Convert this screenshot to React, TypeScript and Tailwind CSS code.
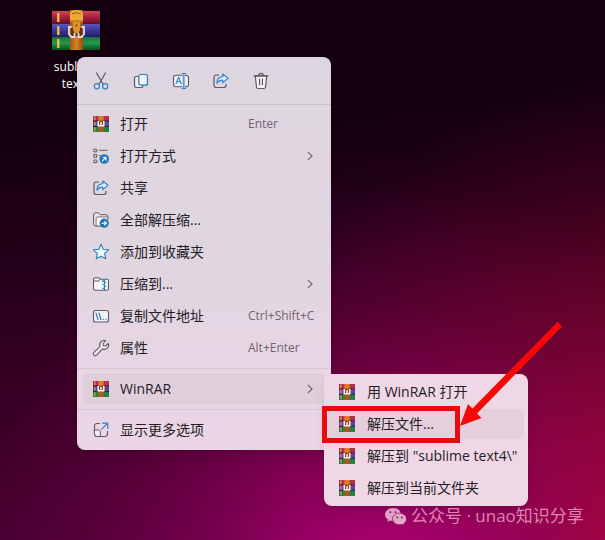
import type { ReactNode } from "react";

type IconProps = { children: ReactNode };

function Icon({ children }: IconProps) {
  return (
    <svg
      viewBox="0 0 16 16"
      className="size-4 shrink-0 overflow-visible"
      fill="none"
      stroke="#5d5963"
      strokeLinecap="round"
      strokeLinejoin="round"
      aria-hidden="true"
    >
      {children}
    </svg>
  );
}

function CutIcon() {
  return (
    <Icon>
      <path d="M3.6 0 10 11.2M12.4 0 6 11.2" strokeWidth="1.2" />
      <circle cx="3.8" cy="13.2" r="2.6" stroke="#2f86c8" strokeWidth="1.2" />
      <circle cx="12.2" cy="13.2" r="2.6" stroke="#2f86c8" strokeWidth="1.2" />
    </Icon>
  );
}

function CopyIcon() {
  return (
    <Icon>
      <path
        d="M5.5 3.5H3.2A1.7 1.7 0 0 0 1.5 5.2v7.6a1.7 1.7 0 0 0 1.7 1.7h5.1a1.7 1.7 0 0 0 1.7-1.7v-.6"
        fill="#eeedf4"
        strokeWidth="1.2"
      />
      <rect x="5.8" y="1.5" width="8.7" height="10.7" rx="2" fill="#edf6fd" stroke="#2879ae" strokeWidth="1.2" />
    </Icon>
  );
}

function RenameIcon() {
  return (
    <Icon>
      <path
        d="M9 2.2H3a2.5 2.5 0 0 0-2.5 2.5v6.6A2.5 2.5 0 0 0 3 13.8h6M12.4 2.2h.6a2.5 2.5 0 0 1 2.5 2.5v6.6a2.5 2.5 0 0 1-2.5 2.5h-.6"
        fill="#eeedf4"
        strokeWidth="1.1"
      />
      <path d="m3 10.8 2.6-6.6 2.6 6.6M3.9 8.7h3.4" stroke="#2f86c8" strokeWidth="1.1" />
      <path d="M9 .5h3.6M9 15.5h3.6M10.8.5v15" stroke="#2f86c8" strokeWidth="1.1" />
    </Icon>
  );
}

function ShareIcon() {
  return (
    <Icon>
      <path
        d="M5.5 2H3.2A2.2 2.2 0 0 0 1 4.2v8.1a2.2 2.2 0 0 0 2.2 2.2h7.6a2.2 2.2 0 0 0 2.2-2.2v-1"
        strokeWidth="1.2"
      />
      <path
        d="M9.8 1 15 5.3 9.8 9.6V7.2C7.2 7.1 5.4 8 4 10.3 4 6.6 6 3.9 9.8 3.6Z"
        fill="#e3f3fd"
        stroke="#2f86c8"
        strokeWidth="1.2"
      />
    </Icon>
  );
}

function TrashIcon() {
  return (
    <Icon>
      <path d="M2.2 2.8h11.6l-1.3 11.2a1.7 1.7 0 0 1-1.7 1.5H5.2A1.7 1.7 0 0 1 3.5 14Z" fill="#f5f1f5" strokeWidth="1.2" />
      <path d="M1 2.8h14M5.8 2.6a2.2 2.2 0 0 1 4.4 0M6.6 6.3v5.4M9.4 6.3v5.4" strokeWidth="1.2" />
    </Icon>
  );
}

function OpenWithIcon() {
  return (
    <Icon>
      <path d="M1.2 1.2h2.6v2.6H1.2ZM1.2 6.6h2.6v2.6H1.2ZM1.2 12h2.6v2.6H1.2ZM6.5 2.3H14M6.5 7.5h.5" />
      <circle cx="11.2" cy="11" r="4.8" fill="#2078b8" stroke="none" />
      <path d="m9.4 12.8 3.5-3.5M10.2 9.2H13V12" stroke="#fff" strokeWidth="1.1" />
    </Icon>
  );
}

function ExtractIcon() {
  return (
    <Icon>
      <path
        d="M7 14H2.8A2.2 2.2 0 0 1 .6 11.8V3A2.2 2.2 0 0 1 2.8.8h2.5l1.9 1.9h5.6a2 2 0 0 1 2 2v2"
        fill="#e9e3ea"
      />
      <path d="M7 14H4.6a1.5 1.5 0 0 1-1.5-1.5V6.4a1.5 1.5 0 0 1 1.5-1.5h10.2v3" fill="#f7f4f9" strokeWidth=".8" />
      <circle cx="11.2" cy="11.2" r="4.6" fill="#2078b8" stroke="none" />
      <path d="M9 11.2h4.3m-1.7-1.8 1.8 1.8-1.8 1.8" stroke="#fff" strokeWidth="1.1" />
    </Icon>
  );
}

function StarIcon() {
  return (
    <Icon>
      <path
        d="m8 .2 2.3 5 5.4.6-4 3.6 1.1 5.4L8 12.2l-4.8 2.6 1.1-5.4-4-3.6 5.4-.6Z"
        fill="#edf5fb"
        stroke="#2e7fb8"
        strokeWidth="1.1"
      />
    </Icon>
  );
}

function CompressIcon() {
  return (
    <Icon>
      <path
        d="M.5 3.5A1.8 1.8 0 0 1 2.3 1.7h3.2l1.8 1.6h6.4a1.8 1.8 0 0 1 1.8 1.8v7.4a1.8 1.8 0 0 1-1.8 1.8H2.3a1.8 1.8 0 0 1-1.8-1.8Z"
        fill="#f7f5fa"
        strokeWidth="1.1"
      />
      <path d="M.8 5h4.6l1.9-1.5" />
      <path
        d="M9.8 3.5v2h1.7M11.5 3.5v10.5M11.5 6.5h1.3M9.8 8.5h1.7M11.5 10.5h1.3M9.8 12.3h1.7"
        stroke="#2987b8"
        strokeWidth="1.2"
      />
    </Icon>
  );
}

function PathIcon() {
  return (
    <Icon>
      <rect x=".5" y="2.5" width="15" height="11.5" rx="2" fill="#f3f2f8" strokeWidth="1.1" />
      <path d="m3 5 1.9 6.5M6 5l1.9 6.5M10 11.4h.2M12.7 11.4h.2" stroke="#2a7baa" strokeWidth="1.1" />
    </Icon>
  );
}

function WrenchIcon() {
  return (
    <Icon>
      <path
        d="M12.6.7a4.4 4.4 0 0 0-5.5 6L.9 12.4a1.9 1.9 0 0 0 2.7 2.7l5.7-6.2a4.4 4.4 0 0 0 6-5.5L12.5 6l-2.2-.3-.3-2.2Z"
        fill="#f7f2f6"
        strokeWidth="1.1"
      />
    </Icon>
  );
}

function MoreIcon() {
  return (
    <Icon>
      <path
        d="M6.5 1.5H4A2.5 2.5 0 0 0 1.5 4v8A2.5 2.5 0 0 0 4 14.5h8a2.5 2.5 0 0 0 2.5-2.5v-2.5"
        strokeWidth="1.1"
      />
      <path d="M1.5 8h4A1.8 1.8 0 0 1 7.3 9.8v4.7H4A2.5 2.5 0 0 1 1.5 12Z" fill="#f5eff5" />
      <path d="M8.7 7.1 14.5 1.3M9.5 1.2h5.2v5.2" stroke="#2f86c8" strokeWidth="1.2" />
    </Icon>
  );
}

function WinrarIcon() {
  return (
    <svg viewBox="0 0 16 16" className="size-4 shrink-0" aria-hidden="true">
      <path d="M0 0h16v5H0z" fill="#b52f4b" />
      <path d="M0 5h16v5.5H0z" fill="#5a469c" />
      <path d="M0 10.5h16V16H0z" fill="#1d8540" />
      <path d="M0 4.500h16v.9H0zM0 10h16v.9H0z" fill="#382239" />
      <path d="M1.3.6h1.2v3.6H1.3zM1.3 5.9h1.2v3.5H1.3zM1.3 11.2h1.2v4H1.3z" fill="#d9a05b" />
      <path d="M5.5 0h5v16h-5z" fill="#b3561f" />
      <path d="M5.5 0h5v4.5h-5z" fill="#df7e2b" />
      <path d="M4.5 5h7v5.5h-7z" fill="#8a4527" />
      <path d="M5.2 5v4.800h5.600V5M8 6v3.500" fill="none" stroke="#fff" strokeWidth="1.400" />
    </svg>
  );
}

function ArchiveIcon() {
  return (
    <svg viewBox="0 0 48 40" className="h-10 w-12" aria-hidden="true">
      <defs>
        <linearGradient id="red" x2="0" y2="1">
          <stop stopColor="#d0495d" />
          <stop offset=".35" stopColor="#b62645" />
          <stop offset="1" stopColor="#600d27" />
        </linearGradient>
        <linearGradient id="blue" x2="0" y2="1">
          <stop stopColor="#5758bd" />
          <stop offset=".5" stopColor="#3d359a" />
          <stop offset="1" stopColor="#211b65" />
        </linearGradient>
        <linearGradient id="green" x2="0" y2="1">
          <stop stopColor="#167039" />
          <stop offset=".45" stopColor="#269b4c" />
          <stop offset="1" stopColor="#07501e" />
        </linearGradient>
        <linearGradient id="strap">
          <stop stopColor="#a45416" />
          <stop offset=".5" stopColor="#d98426" />
          <stop offset="1" stopColor="#9a4912" />
        </linearGradient>
      </defs>
      <rect y="1" width="48" height="13" rx="1" fill="url(#red)" />
      <rect y="14" width="48" height="13" rx="1" fill="url(#blue)" />
      <rect y="27" width="48" height="13" rx="1" fill="url(#green)" />
      <path d="M5 3h2.500v9H5zM5 16h2.500v9H5zM5 29h2.500v9H5z" fill="#e8b83f" />
      <path d="M18 0h13v40H18z" fill="url(#strap)" />
      <path d="M18 4q0-4 6.500-4T31 4v8H18z" fill="#edaa34" />
      <path d="M18 11h13M20 4q4.500-3 9 0" fill="none" stroke="#9c5a18" />
      <path d="M19 18h11v8H19z" fill="#5b3014" />
      <path d="M21 12h7v8l-1.500 3h-4L21 20z" fill="#df922c" />
      <circle cx="24.5" cy="15.5" r="1" fill="#753d16" />
      <path d="M19.500 17H17v7.500l2.500 2.500h3v-4M29.500 17H32v7.500l-2.500 2.500h-3v-4" fill="none" stroke="#e6dcd5" strokeWidth="1.800" />
    </svg>
  );
}

function Chevron() {
  return (
    <svg viewBox="0 0 8 12" className="ml-auto h-3 w-2 shrink-0" fill="none" stroke="#706870" strokeWidth="1.2" aria-hidden="true">
      <path d="M.8 1.8 5 6 .8 10.2" />
    </svg>
  );
}

type MenuEntry = {
  label: string;
  icon: ReactNode;
  shortcut?: string;
  submenu?: boolean;
};

const TOOLS = [
  { label: "剪切", icon: <CutIcon /> },
  { label: "复制", icon: <CopyIcon /> },
  { label: "重命名", icon: <RenameIcon /> },
  { label: "共享", icon: <ShareIcon /> },
  { label: "删除", icon: <TrashIcon /> },
];

const ENTRIES: MenuEntry[] = [
  { label: "打开", icon: <WinrarIcon />, shortcut: "Enter" },
  { label: "打开方式", icon: <OpenWithIcon />, submenu: true },
  { label: "共享", icon: <ShareIcon /> },
  { label: "全部解压缩...", icon: <ExtractIcon /> },
  { label: "添加到收藏夹", icon: <StarIcon /> },
  { label: "压缩到...", icon: <CompressIcon />, submenu: true },
  { label: "复制文件地址", icon: <PathIcon />, shortcut: "Ctrl+Shift+C" },
  { label: "属性", icon: <WrenchIcon />, shortcut: "Alt+Enter" },
];

const WINRAR_ENTRIES = ["用 WinRAR 打开", "解压文件...", '解压到 "sublime text4\\"', "解压到当前文件夹"];

function MenuRow({ label, icon, shortcut, submenu }: MenuEntry) {
  return (
    <button type="button" role="menuitem" className="flex h-8 w-full items-center px-4 text-left text-sm whitespace-nowrap">
      {icon}
      <span className="ml-[11px] w-32">{label}</span>
      {shortcut ? <span className="text-xs text-[#70656f]">{shortcut}</span> : null}
      {submenu ? <Chevron /> : null}
    </button>
  );
}

function ContextMenu() {
  return (
    <div
      role="menu"
      className="absolute top-[57px] left-[77px] w-[254px] rounded-lg bg-linear-to-b from-[#ddd5df] via-[#e0d6e0] to-[#ebd5e5] text-[#241d26] shadow-lg"
    >
      <div className="flex h-12 items-center gap-6 border-b border-[#cbc1cd] px-4">
        {TOOLS.map((tool) => (
          <button key={tool.label} type="button" aria-label={tool.label}>
            {tool.icon}
          </button>
        ))}
      </div>
      <div className="border-b border-[#d6c7d3] pt-[3px] pb-1">
        {ENTRIES.map((entry) => (
          <MenuRow key={entry.label} {...entry} />
        ))}
      </div>
      <div className="border-b border-[#d6c7d3] pt-1 pb-[5px]">
        <div className="mx-1.5 rounded bg-[#e0cfdb]">
          <button type="button" role="menuitem" className="flex h-[31px] w-full items-center px-2.5 text-left text-sm">
            <WinrarIcon />
            <span className="ml-[11px]">WinRAR</span>
            <Chevron />
          </button>
        </div>
      </div>
      <div className="py-1">
        <MenuRow label="显示更多选项" icon={<MoreIcon />} />
      </div>
    </div>
  );
}

function WinrarMenu() {
  return (
    <div
      role="menu"
      className="absolute top-[374px] left-[324px] w-[204px] rounded-lg bg-[#efd7e5] px-1 py-0.5 text-[#241d26] shadow-lg"
    >
      {WINRAR_ENTRIES.map((label, index) => (
        <div key={label} className="py-px">
          <button
            type="button"
            role="menuitem"
            className={`flex h-[30px] w-full items-center rounded pl-[11px] text-left text-sm whitespace-nowrap ${
              index === 1 ? "bg-[#e7cedc]" : ""
            }`}
          >
            <WinrarIcon />
            <span className="ml-3">{label}</span>
          </button>
        </div>
      ))}
    </div>
  );
}

function Highlight() {
  return (
    <>
      <div className="pointer-events-none absolute top-[406px] left-[322px] h-[37px] w-[138px] border-[5px] border-[#e80b0e]" />
      <svg
        viewBox="0 0 102 104"
        className="pointer-events-none absolute top-[322px] left-[460px] h-[104px] w-[102px]"
        fill="#f50808"
        aria-hidden="true"
      >
        <path d="M0 104 8 82 12.5 86.5 97.5 0 102 4.5 17 91.5 21.5 96Z" />
      </svg>
    </>
  );
}

function Watermark() {
  return (
    <div className="absolute top-[504px] left-[385px] flex items-center gap-1 text-[#dd86b3]">
      <svg viewBox="0 0 22 20" className="h-5 w-[22px]" aria-hidden="true">
        <path
          d="M8 2C3.5 2 0 4.9 0 8.6c0 2.1 1.2 3.9 3 5.1l-.7 2.2 2.6-1.3c1 .3 2 .5 3.1.5C12.5 15 16 12 16 8.4S12.5 2 8 2Z"
          fill="#dda0c4"
        />
        <path
          d="M14.6 7.2c-4 0-7.1 2.6-7.1 5.8s3.1 5.8 7.1 5.8c.9 0 1.7-.1 2.5-.4l2.2 1.1-.6-1.8c1.8-1.1 2.8-2.8 2.8-4.7 0-3.2-3-5.8-6.9-5.8Z"
          fill="#e0a7c8"
          stroke="#8f0757"
          strokeWidth=".7"
        />
        <path d="M5.3 6.2h.1M10.5 6.2h.1M12.2 11.4h.1M16.8 11.4h.1" stroke="#8f0757" strokeWidth="1.8" strokeLinecap="round" />
      </svg>
      <span className="text-[17px] leading-6 whitespace-nowrap">公众号 · unao知识分享</span>
    </div>
  );
}

function App() {
  return (
    <main className="relative min-h-screen overflow-hidden bg-[radial-gradient(ellipse_68%_80%_at_63%_112%,#b4007a_0%,#a80070dd_20%,#98006499_42%,#88005544_70%,#80005000_100%),radial-gradient(ellipse_75%_90%_at_110%_104%,#c40a2c_0%,#b40830cc_20%,#98062c88_48%,#80042444_75%,#70001c00_100%),linear-gradient(175deg,#14000e_0%,#160010_25%,#24001a_45%,#340022_62%,#44002c_85%,#480034_100%)] font-['Open_Sans','Noto_Sans_CJK_SC',sans-serif]">
      <div className="flex w-[152px] flex-col items-center pt-2.5">
        <ArchiveIcon />
        <p className="mt-2 w-16 text-center text-xs leading-[17px] text-white">sublime text4</p>
      </div>
      <ContextMenu />
      <WinrarMenu />
      <Highlight />
      <Watermark />
    </main>
  );
}

export default App;
